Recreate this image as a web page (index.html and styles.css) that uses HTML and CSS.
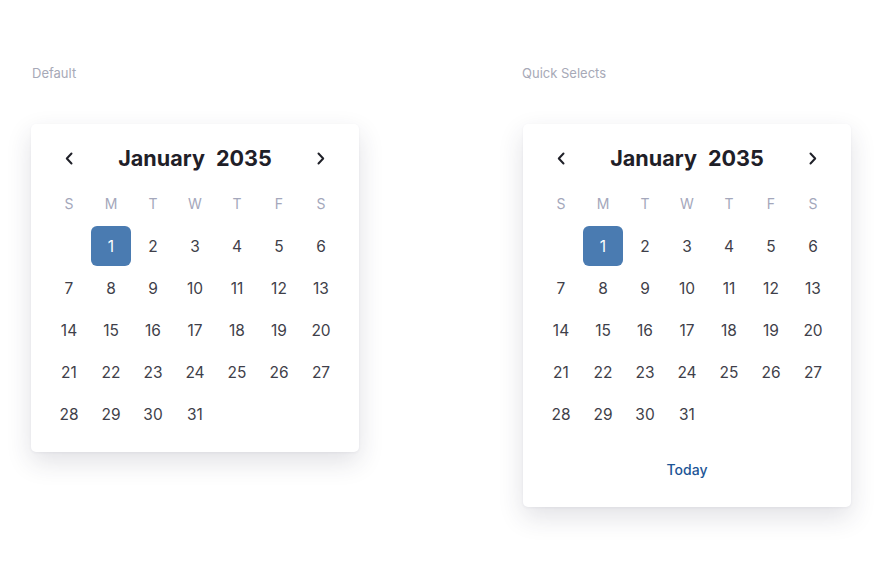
FILE: index.html
```html
<!DOCTYPE html>
<html lang="en">
<head>
<meta charset="utf-8">
<title>Date pickers</title>
<link rel="stylesheet" href="styles.css">
</head>
<body>
<main class="showcase">
  <section class="variant">
    <h2 class="variant-label">Default</h2>
    <div class="calendar">
      <div class="cal-header">
        <button class="nav-btn" aria-label="Previous month">
          <svg width="8" height="13" viewBox="0 0 8 13"><path d="M6.5 1.5 1.8 6.5l4.7 5" fill="none" stroke="currentColor" stroke-width="2" stroke-linecap="round" stroke-linejoin="round"/></svg>
        </button>
        <div class="cal-title"><span>January</span><span>2035</span></div>
        <button class="nav-btn" aria-label="Next month">
          <svg width="8" height="13" viewBox="0 0 8 13"><path d="M1.5 1.5l4.7 5-4.7 5" fill="none" stroke="currentColor" stroke-width="2" stroke-linecap="round" stroke-linejoin="round"/></svg>
        </button>
      </div>
      <div class="cal-grid">
        <span class="wd">S</span><span class="wd">M</span><span class="wd">T</span><span class="wd">W</span><span class="wd">T</span><span class="wd">F</span><span class="wd">S</span>
        <span class="day empty"></span><span class="day selected">1</span><span class="day">2</span><span class="day">3</span><span class="day">4</span><span class="day">5</span><span class="day">6</span>
        <span class="day">7</span><span class="day">8</span><span class="day">9</span><span class="day">10</span><span class="day">11</span><span class="day">12</span><span class="day">13</span>
        <span class="day">14</span><span class="day">15</span><span class="day">16</span><span class="day">17</span><span class="day">18</span><span class="day">19</span><span class="day">20</span>
        <span class="day">21</span><span class="day">22</span><span class="day">23</span><span class="day">24</span><span class="day">25</span><span class="day">26</span><span class="day">27</span>
        <span class="day">28</span><span class="day">29</span><span class="day">30</span><span class="day">31</span>
      </div>
    </div>
  </section>

  <section class="variant variant-quick">
    <h2 class="variant-label">Quick Selects</h2>
    <div class="calendar">
      <div class="cal-header">
        <button class="nav-btn" aria-label="Previous month">
          <svg width="8" height="13" viewBox="0 0 8 13"><path d="M6.5 1.5 1.8 6.5l4.7 5" fill="none" stroke="currentColor" stroke-width="2" stroke-linecap="round" stroke-linejoin="round"/></svg>
        </button>
        <div class="cal-title"><span>January</span><span>2035</span></div>
        <button class="nav-btn" aria-label="Next month">
          <svg width="8" height="13" viewBox="0 0 8 13"><path d="M1.5 1.5l4.7 5-4.7 5" fill="none" stroke="currentColor" stroke-width="2" stroke-linecap="round" stroke-linejoin="round"/></svg>
        </button>
      </div>
      <div class="cal-grid">
        <span class="wd">S</span><span class="wd">M</span><span class="wd">T</span><span class="wd">W</span><span class="wd">T</span><span class="wd">F</span><span class="wd">S</span>
        <span class="day empty"></span><span class="day selected">1</span><span class="day">2</span><span class="day">3</span><span class="day">4</span><span class="day">5</span><span class="day">6</span>
        <span class="day">7</span><span class="day">8</span><span class="day">9</span><span class="day">10</span><span class="day">11</span><span class="day">12</span><span class="day">13</span>
        <span class="day">14</span><span class="day">15</span><span class="day">16</span><span class="day">17</span><span class="day">18</span><span class="day">19</span><span class="day">20</span>
        <span class="day">21</span><span class="day">22</span><span class="day">23</span><span class="day">24</span><span class="day">25</span><span class="day">26</span><span class="day">27</span>
        <span class="day">28</span><span class="day">29</span><span class="day">30</span><span class="day">31</span>
      </div>
      <div class="cal-footer">
        <button class="today-btn">Today</button>
      </div>
    </div>
  </section>
</main>
</body>
</html>
```

FILE: styles.css
```css
* {
  box-sizing: border-box;
}

html, body {
  margin: 0;
  background: #ffffff;
}

body {
  min-height: 100vh;
  font-family: Inter, "Noto Sans", sans-serif;
  color: #3f3f4a;
}

.showcase {
  display: grid;
  grid-template-columns: 328px 328px;
  column-gap: 164px;
  padding: 65px 0 40px 31px;
  align-items: start;
}

.variant-label {
  margin: 0 0 43px 1px;
  font-size: 13px;
  font-weight: 400;
  line-height: 16px;
  color: #a7a9b7;
}

.variant-quick .variant-label {
  margin-left: -1px;
}

.calendar {
  width: 328px;
  background: #ffffff;
  border-radius: 5px;
  padding: 16px 18px 18px;
  box-shadow: 0 10px 26px rgba(40, 45, 70, 0.14), 0 1px 3px rgba(40, 45, 70, 0.05);
}

.cal-header {
  display: flex;
  align-items: center;
  justify-content: space-between;
  height: 36px;
  margin-bottom: 8px;
}

.nav-btn {
  width: 40px;
  height: 36px;
  display: flex;
  align-items: center;
  justify-content: center;
  border: 0;
  background: none;
  padding: 0;
  color: #1f2028;
  cursor: pointer;
}

.cal-title {
  display: flex;
  gap: 11px;
  font-size: 21.6px;
  font-weight: 700;
  color: #1f2028;
}

.cal-grid {
  display: grid;
  grid-template-columns: repeat(7, 40px);
  grid-auto-rows: 40px;
  gap: 2px;
}

.wd {
  display: flex;
  align-items: center;
  justify-content: center;
  font-size: 14px;
  padding-bottom: 2px;
  color: #a4a7bb;
}

.day {
  display: flex;
  align-items: center;
  justify-content: center;
  font-size: 15.5px;
  color: #3f3f4a;
  border-radius: 6px;
}

.day.selected {
  background: #4a7bb1;
  color: #ffffff;
}

.cal-footer {
  display: flex;
  justify-content: center;
  align-items: center;
  height: 40px;
  margin-top: 15px;
}

.today-btn {
  border: 0;
  background: none;
  padding: 0;
  font-family: inherit;
  font-size: 14px;
  font-weight: 500;
  color: #1d5596;
  cursor: pointer;
}
```
